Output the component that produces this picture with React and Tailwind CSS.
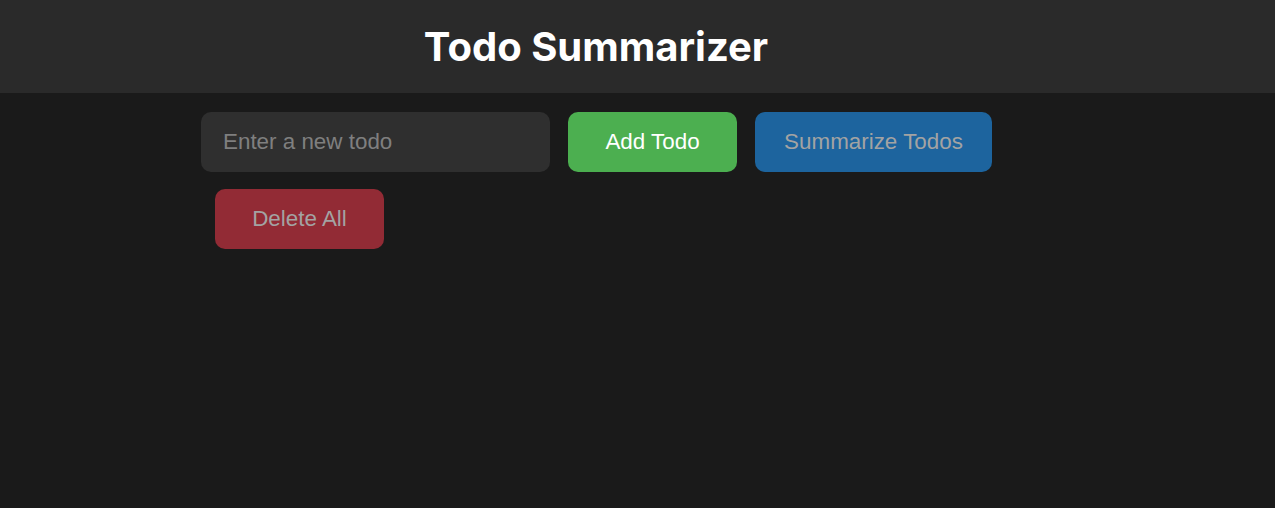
export default function App() {
  return (
    <div className="min-h-[508px] bg-[#1a1a1a] font-['Liberation_Sans',Arial,sans-serif]">
      <header className="h-[93px] bg-[#2a2a2a] flex items-center">
        <div className="ml-[201px] w-[790px] text-center">
          <h1 className="font-['Inter',sans-serif] text-[40px] font-bold text-white leading-none">Todo Summarizer</h1>
        </div>
      </header>
      <main className="ml-[201px] w-[800px] pt-[19px]">
        <div className="flex flex-wrap gap-[18px]">
          <input
            type="text"
            placeholder="Enter a new todo"
            className="w-[349px] h-[60px] rounded-[10px] bg-[#2f2f2f] px-[22px] text-[22.4px] text-white placeholder-[#7f7f7f] outline-none"
          />
          <button className="w-[169px] h-[60px] rounded-[10px] bg-[#4caf50] text-[22.4px] text-white">Add Todo</button>
          <button disabled className="w-[237px] h-[60px] rounded-[10px] bg-[#1d649e] text-[22.4px] text-[#a3a3a3]">Summarize Todos</button>
        </div>
        <div className="mt-[17px] ml-[14px]">
          <button disabled className="w-[169px] h-[60px] rounded-[10px] bg-[#922b35] text-[22.4px] text-[#a3a3a3]">Delete All</button>
        </div>
      </main>
    </div>
  );
}
